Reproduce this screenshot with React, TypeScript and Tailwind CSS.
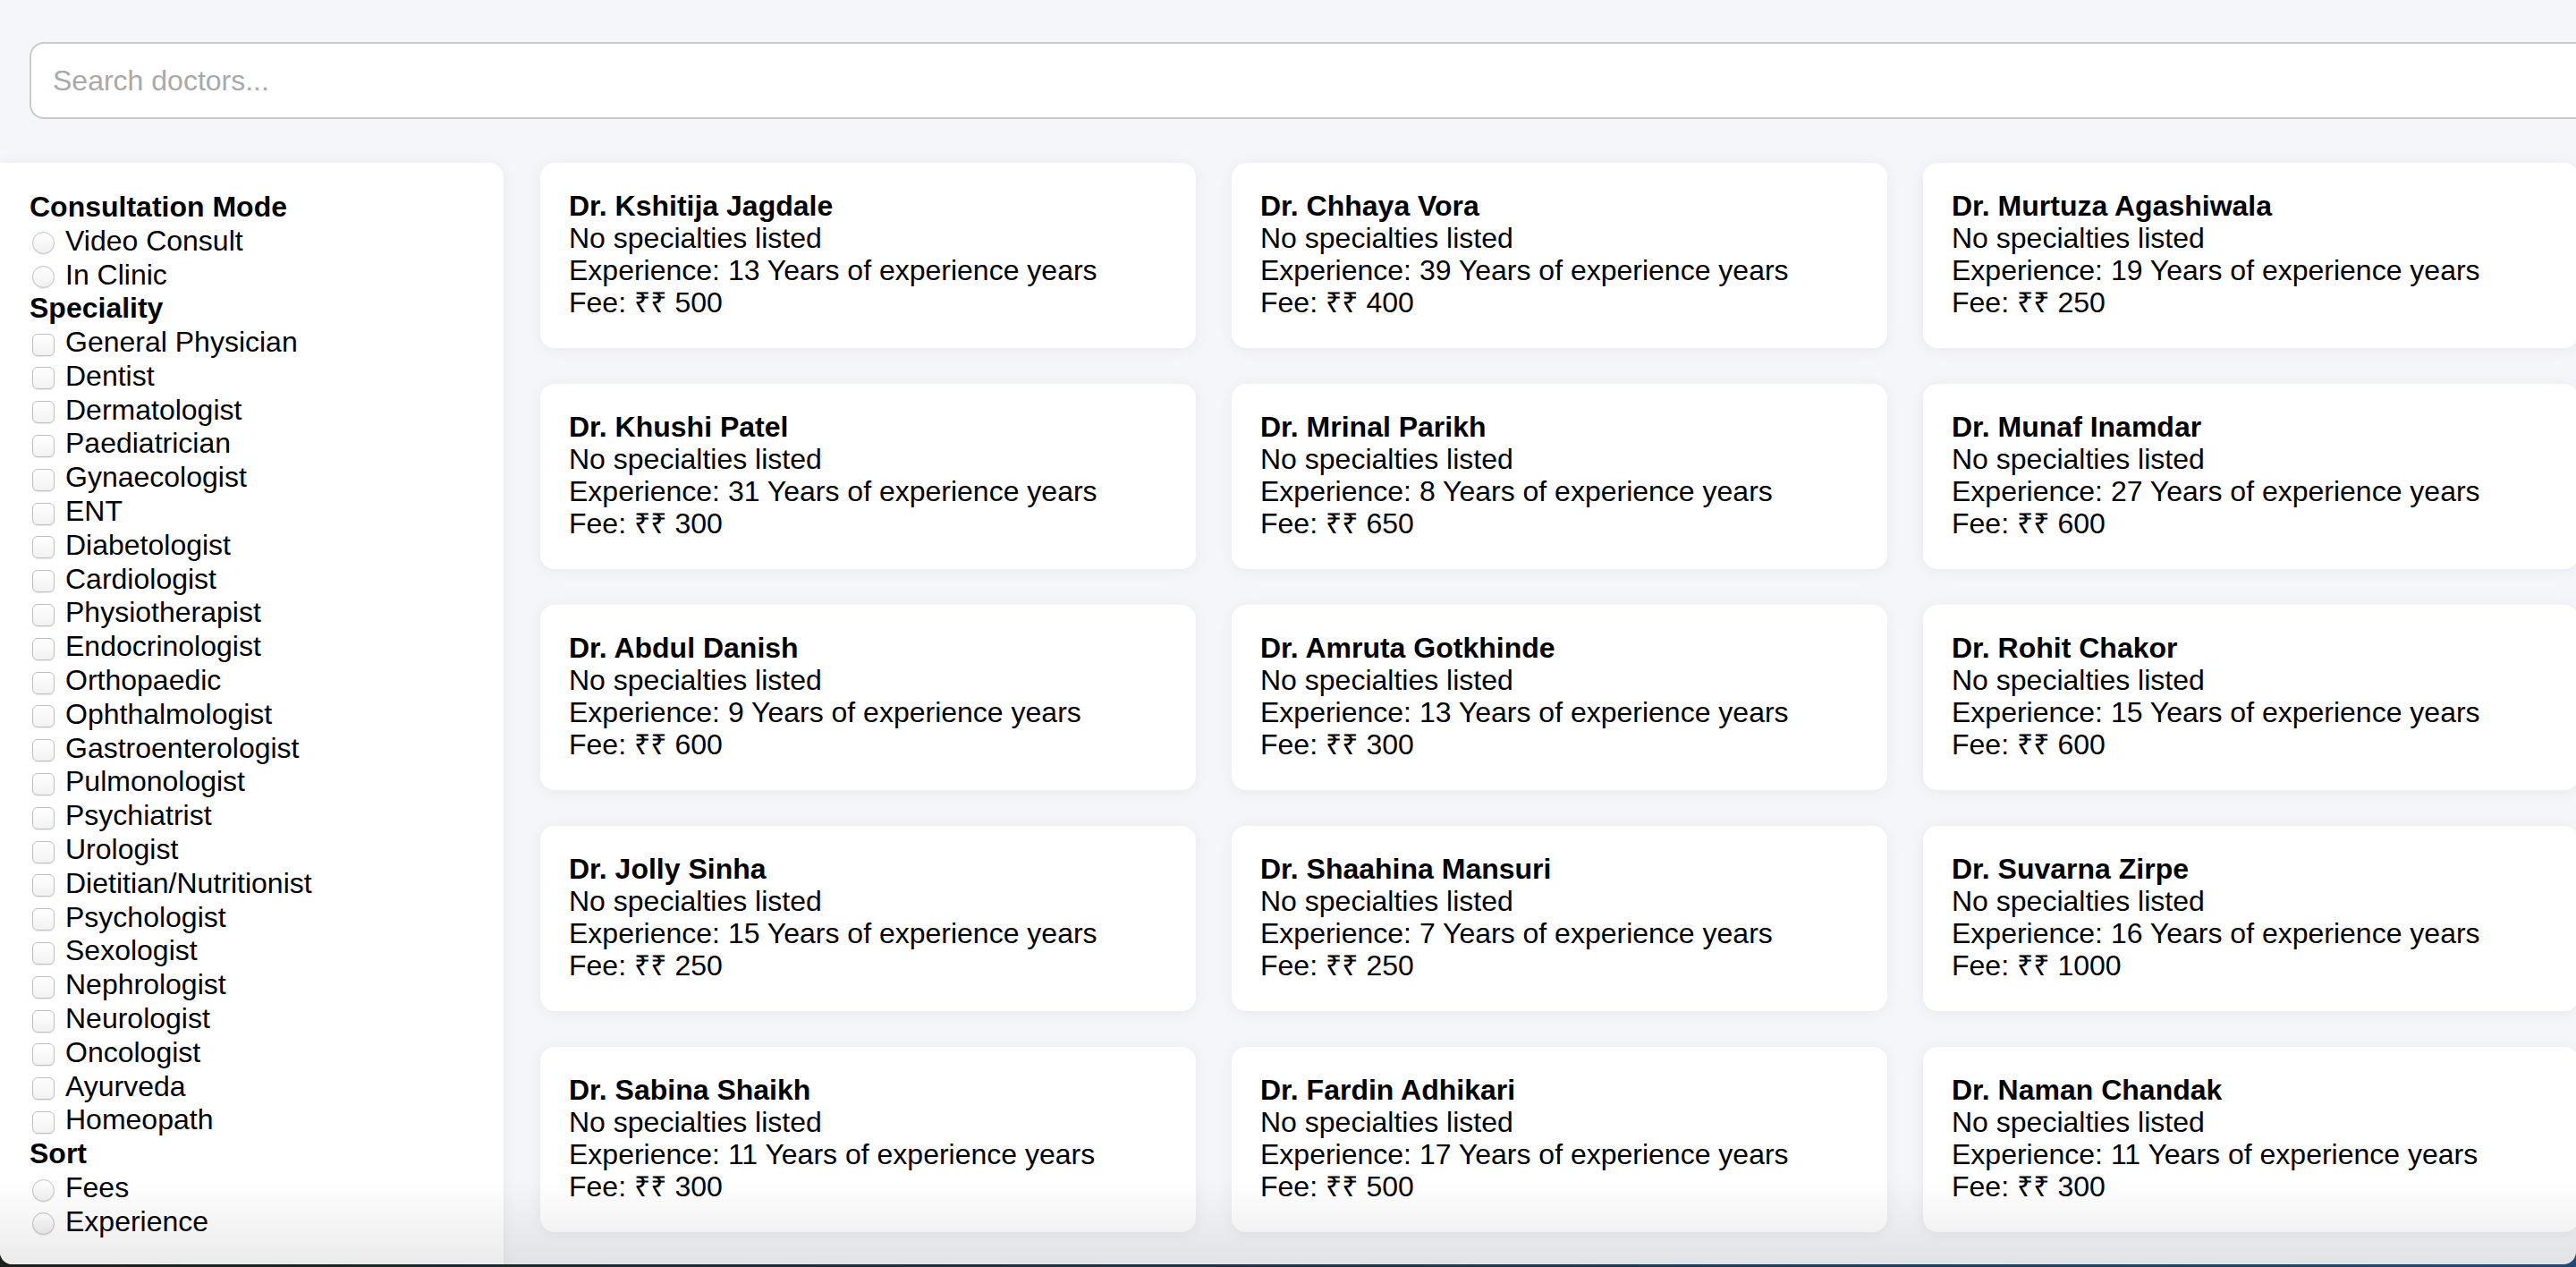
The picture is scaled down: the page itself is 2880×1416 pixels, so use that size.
import React from "react";

const doctors = [
  { name: "Dr. Kshitija Jagdale", exp: 13, fee: 500 },
  { name: "Dr. Chhaya Vora", exp: 39, fee: 400 },
  { name: "Dr. Murtuza Agashiwala", exp: 19, fee: 250 },
  { name: "Dr. Khushi Patel", exp: 31, fee: 300 },
  { name: "Dr. Mrinal Parikh", exp: 8, fee: 650 },
  { name: "Dr. Munaf Inamdar", exp: 27, fee: 600 },
  { name: "Dr. Abdul Danish", exp: 9, fee: 600 },
  { name: "Dr. Amruta Gotkhinde", exp: 13, fee: 300 },
  { name: "Dr. Rohit Chakor", exp: 15, fee: 600 },
  { name: "Dr. Jolly Sinha", exp: 15, fee: 250 },
  { name: "Dr. Shaahina Mansuri", exp: 7, fee: 250 },
  { name: "Dr. Suvarna Zirpe", exp: 16, fee: 1000 },
  { name: "Dr. Sabina Shaikh", exp: 11, fee: 300 },
  { name: "Dr. Fardin Adhikari", exp: 17, fee: 500 },
  { name: "Dr. Naman Chandak", exp: 11, fee: 300 },
];

const specialities = [
  "General Physician",
  "Dentist",
  "Dermatologist",
  "Paediatrician",
  "Gynaecologist",
  "ENT",
  "Diabetologist",
  "Cardiologist",
  "Physiotherapist",
  "Endocrinologist",
  "Orthopaedic",
  "Ophthalmologist",
  "Gastroenterologist",
  "Pulmonologist",
  "Psychiatrist",
  "Urologist",
  "Dietitian/Nutritionist",
  "Psychologist",
  "Sexologist",
  "Nephrologist",
  "Neurologist",
  "Oncologist",
  "Ayurveda",
  "Homeopath",
];

function Radio({ label }: { label: string }) {
  return (
    <div className="flex h-[37.8px] items-center gap-[12px] pl-[3px]">
      <span className="block h-[25px] w-[25px] translate-y-[3px] rounded-full border border-[#bfbfbf] bg-gradient-to-b from-white to-[#f0f0f0] shadow-[0_1px_1px_rgba(0,0,0,0.08)]" />
      <span>{label}</span>
    </div>
  );
}

function Check({ label }: { label: string }) {
  return (
    <div className="flex h-[37.8px] items-center gap-[12px] pl-[3px]">
      <span className="block h-[25px] w-[25px] translate-y-[3px] rounded-[6px] border border-[#bfbfbf] bg-gradient-to-b from-white to-[#f2f2f2] shadow-[0_1px_1px_rgba(0,0,0,0.08)]" />
      <span>{label}</span>
    </div>
  );
}

function Heading({ children }: { children: React.ReactNode }) {
  return <div className="flex h-[37.8px] items-center font-bold">{children}</div>;
}

export default function App() {
  return (
    <div
      className="relative h-[1416px] w-[2880px] overflow-hidden bg-gradient-to-r from-[#1a201c] to-[#1d4a78] text-black"
      style={{ fontFamily: '"Liberation Sans", Arial, "Noto Sans", sans-serif' }}
    >
      <div className="relative h-[1413px] overflow-hidden rounded-b-[14px] bg-[#f5f6fa]">
        <div className="pl-[33px] pt-[47px]">
          <input
            placeholder="Search doctors..."
            className="block h-[86px] w-[2900px] rounded-[16px] border-2 border-[#cbcbcb] bg-white px-[24px] text-[32px] text-black outline-none placeholder:text-[#a9a9a9]"
          />
        </div>
        <div className="mt-[49px] flex gap-[41px]">
          <aside className="w-[563px] shrink-0 rounded-r-[16px] bg-white px-[33px] pb-[80px] pt-[30px] text-[32px] shadow-[0_2px_16px_rgba(0,0,0,0.06)]">
            <Heading>Consultation Mode</Heading>
            <Radio label="Video Consult" />
            <Radio label="In Clinic" />
            <Heading>Speciality</Heading>
            {specialities.map((s) => (
              <Check key={s} label={s} />
            ))}
            <Heading>Sort</Heading>
            <Radio label="Fees" />
            <Radio label="Experience" />
          </aside>
          <div className="grid w-[2279px] shrink-0 grid-cols-3 content-start gap-[40px]">
            {doctors.map((d) => (
              <div
                key={d.name}
                className="h-[207px] rounded-[16px] bg-white px-[32px] pb-[32px] pt-[30px] text-[32px] leading-[36px] shadow-[0_2px_16px_rgba(0,0,0,0.06)]"
              >
                <div className="font-bold">{d.name}</div>
                <div>No specialties listed</div>
                <div>Experience: {d.exp} Years of experience years</div>
                <div>Fee: ₹₹ {d.fee}</div>
              </div>
            ))}
          </div>
        </div>
        <div className="pointer-events-none absolute inset-x-0 bottom-0 h-[96px] bg-gradient-to-b from-transparent to-black/[0.08]" />
      </div>
    </div>
  );
}
